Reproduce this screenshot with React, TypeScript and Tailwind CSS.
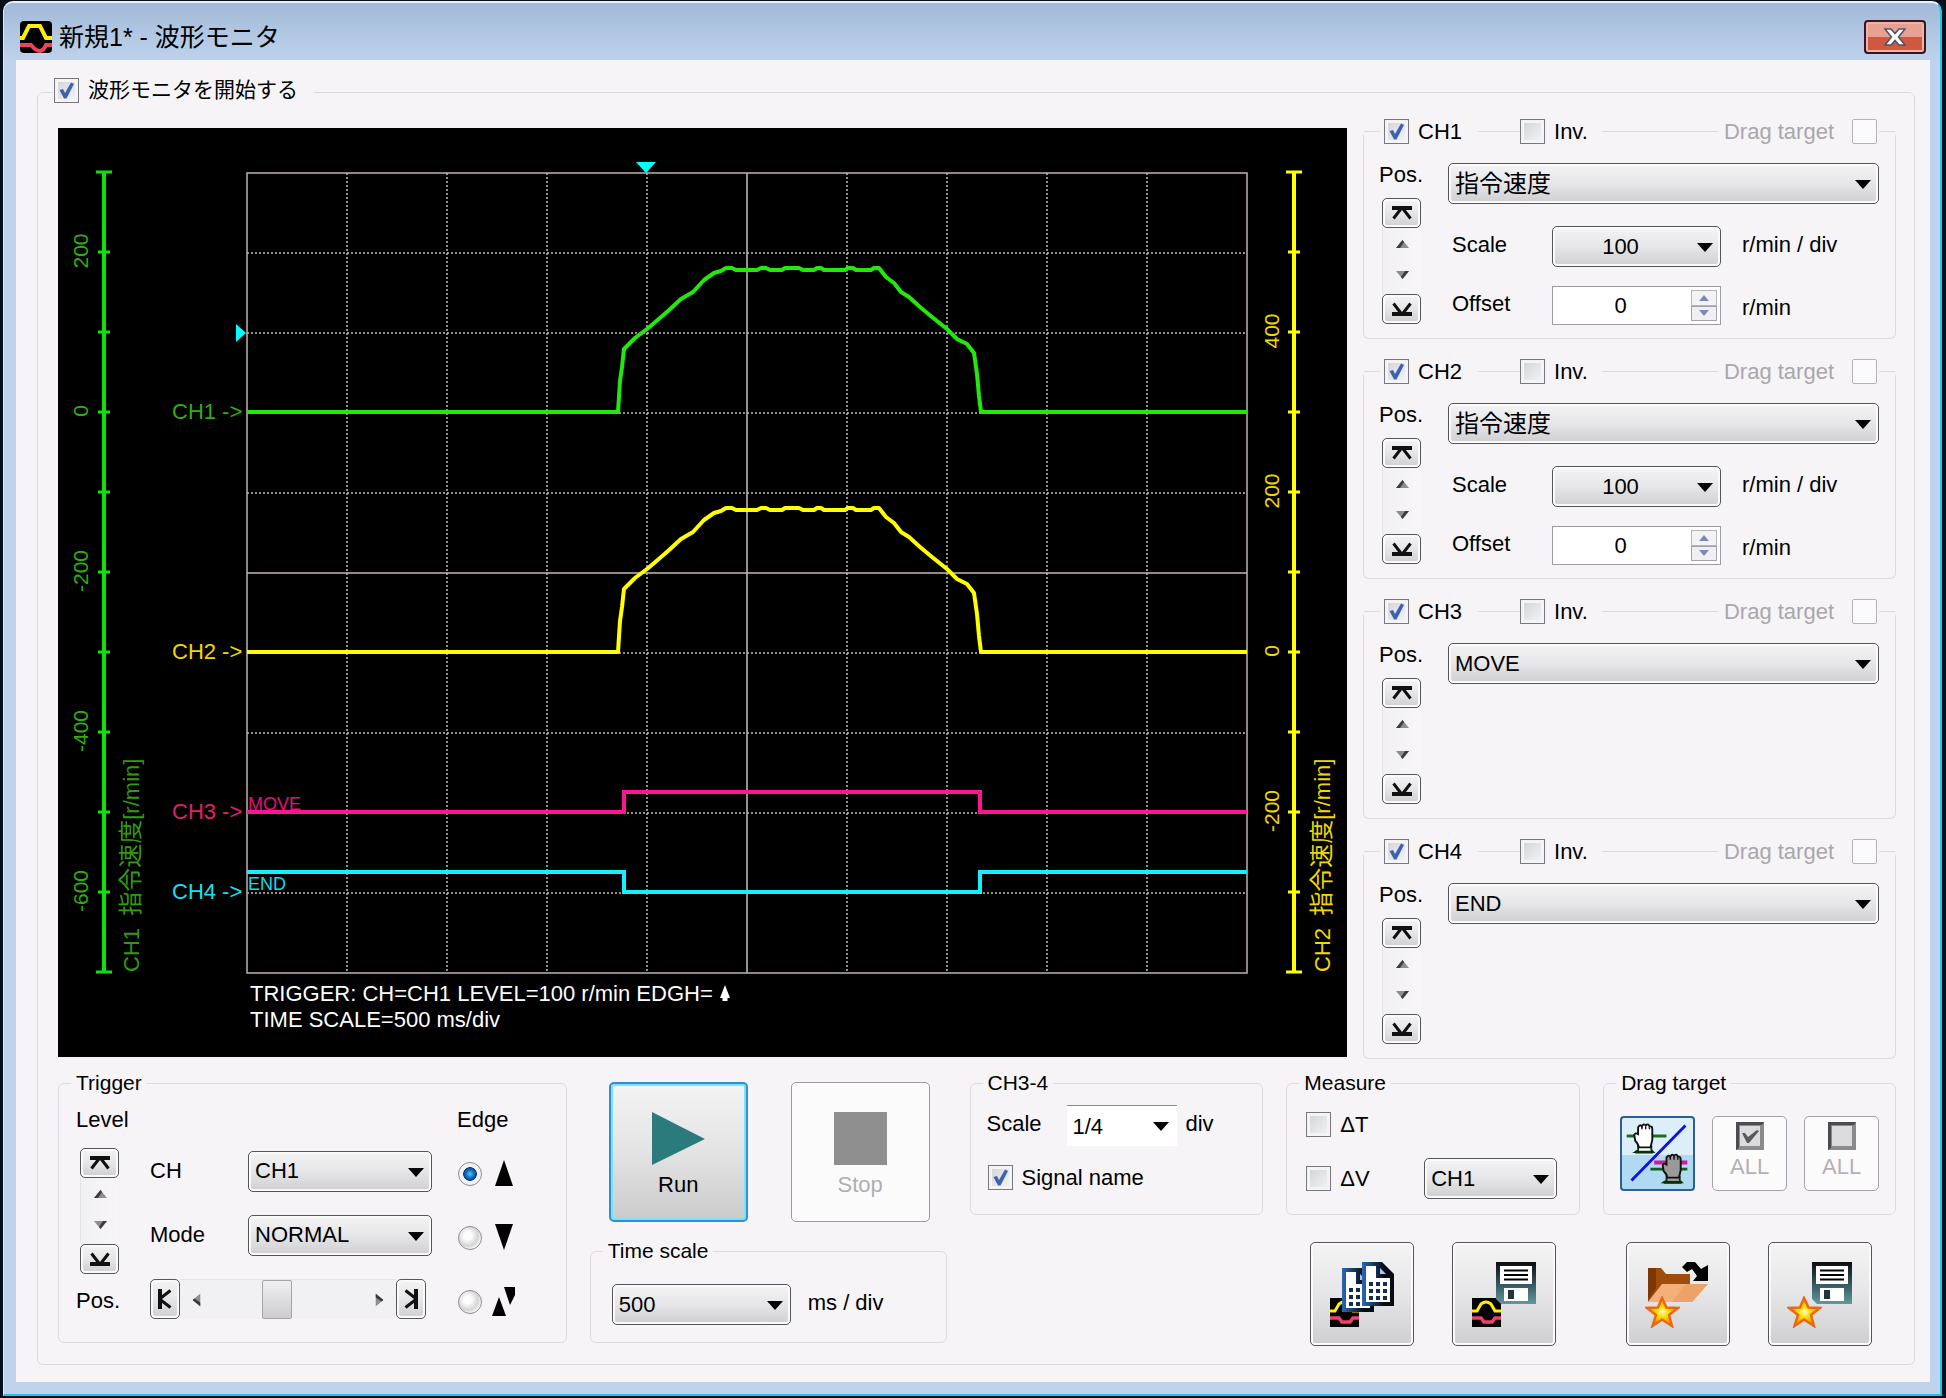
import React, { useState } from 'react';
import clsx from 'clsx';

type Option = string;

interface ChannelConfig {
  id: string;
  signal: string;
  analog: boolean;
}

const channels: ChannelConfig[] = [
  { id: 'CH1', signal: '指令速度', analog: true },
  { id: 'CH2', signal: '指令速度', analog: true },
  { id: 'CH3', signal: 'MOVE', analog: false },
  { id: 'CH4', signal: 'END', analog: false },
];

const signalOptions: Option[] = ['指令速度', 'MOVE', 'END'];

// Speed curve samples in scope units, relative to the channel's zero line
const speedCurve: [number, number][] = [
  [189, 0], [560, 0], [562, 31], [564, 45], [566, 63], [577, 74], [589, 83], [595, 88], [610, 101],
  [623, 113], [635, 120], [646, 132], [656, 139], [663, 141], [668, 144], [674, 144], [678, 142], [699, 142],
  [703, 144], [708, 144], [712, 142], [724, 142], [727, 144], [741, 144], [745, 142], [756, 142], [759, 144],
  [763, 144], [766, 142], [787, 142], [790, 144], [795, 144], [798, 142], [813, 142], [816, 144], [821, 144],
  [828, 135], [836, 129], [843, 120], [851, 115], [862, 105], [874, 95], [889, 83], [899, 73], [909, 68],
  [916, 59], [919, 38], [921, 16], [923, 0], [1189, 0],
];

const curvePoints = (zero: number) => speedCurve.map(([x, y]) => `${x},${zero - y}`).join(' ');

const buttonFace = 'bg-linear-to-b from-[#f4f4f4] via-[#e6e6e8] to-[#cfcfd1] border border-[#55555c] shadow-[inset_0_0_0_2px_#fafafa]';

/* ---------- small controls ---------- */

const CheckBox = ({ label, checked = false, disabled = false, labelFirst = false }: {
  label: string; checked?: boolean; disabled?: boolean; labelFirst?: boolean;
}) => {
  const [on, setOn] = useState(checked);
  return (
    <label className={clsx('flex items-center', labelFirst ? 'flex-row-reverse gap-[18px]' : 'gap-[9px]', disabled && 'text-[#a9a7ab]')}>
      <span className="relative block size-[25px] shrink-0">
        <input
          type="checkbox"
          checked={on}
          disabled={disabled}
          onChange={() => setOn(!on)}
          className={clsx(
            'block size-[25px] appearance-none border',
            disabled
              ? 'rounded-[2px] border-[#b4b2b6] bg-[#fbfafc]'
              : 'border-[#77777d] bg-linear-to-br from-[#cfd2d6] to-[#f6f6f7] shadow-[inset_0_0_0_3px_#f4f4f5]'
          )}
        />
        {on && (
          <svg viewBox="0 0 25 25" className="pointer-events-none absolute inset-0 size-[25px]">
            <path d="M5.500 12 L9 11 L11 15 L17 4.500 L20 6 L12.500 20.500 L10 20.500 Z" fill="#3f62ae" />
          </svg>
        )}
      </span>
      <span className="whitespace-nowrap">{label}</span>
    </label>
  );
};

const Combo = ({ label, value, options, className, center = false, flat = false }: {
  label: string; value: string; options?: Option[]; className?: string; center?: boolean; flat?: boolean;
}) => {
  const [selected, setSelected] = useState(value);
  return (
    <div className={clsx('relative h-[41px]', className)}>
      <select
        aria-label={label}
        value={selected}
        onChange={(e) => setSelected(e.target.value)}
        className={clsx(
          'size-full appearance-none pr-[32px]',
          center ? '[text-align-last:center]' : 'pl-[6px]',
          flat ? 'border-t border-[#8b8b93] bg-white' : 'rounded-[5px]',
          !flat && buttonFace,
          selected === '指令速度' && 'text-[24px]'
        )}
      >
        {(options ?? [value]).map((o) => <option key={o} value={o}>{o}</option>)}
      </select>
      <svg viewBox="0 0 16 9" className="pointer-events-none absolute right-[8px] top-[17px] h-[9px] w-[16px]">
        <path d="M0 0 H16 L8 9 Z" fill="#000" />
      </svg>
    </div>
  );
};

const EndGlyph = ({ turn }: { turn: string }) => (
  <svg viewBox="0 0 22 14" className={clsx('h-[14px] w-[22px]', turn)}>
    <path d="M1 2 H21" stroke="#111" strokeWidth="4" />
    <path d="M11 1.500 L2.500 12.500 M11 1.500 L19.500 12.500" stroke="#111" strokeWidth="3" fill="none" />
  </svg>
);

const StepArrow = ({ turn }: { turn: string }) => (
  <svg viewBox="0 0 13 8" className={clsx('h-[8px] w-[13px]', turn)}>
    <path d="M6.500 0 L13 8 H0 Z" fill="#8d8d92" />
    <path d="M6.500 0 L0 8 H4 L8 2 Z" fill="#3c3c40" />
  </svg>
);

const VerticalStepper = ({ name }: { name: string }) => (
  <div className="flex w-[39px] flex-col">
    <button aria-label={`${name} max`} className={clsx('flex h-[30px] items-center justify-center rounded-[5px]', buttonFace)}>
      <EndGlyph turn="" />
    </button>
    <div className="flex h-[66px] flex-col items-center gap-[17px] border-l border-[#e6e4e8] bg-linear-to-r from-[#f1f0f2] to-[#f8f6f8] pt-[9px]">
      <button aria-label={`${name} up`} className="px-2 py-[3px]"><StepArrow turn="" /></button>
      <button aria-label={`${name} down`} className="px-2 py-[3px]"><StepArrow turn="rotate-180" /></button>
    </div>
    <button aria-label={`${name} min`} className={clsx('flex h-[30px] items-center justify-center rounded-[5px]', buttonFace)}>
      <EndGlyph turn="rotate-180" />
    </button>
  </div>
);

const Spinner = ({ label }: { label: string }) => {
  const [value, setValue] = useState(0);
  return (
    <div className="flex h-[39px] w-[169px] border border-[#9d9ba3] bg-white p-[3px]">
      <input
        type="number"
        aria-label={label}
        value={value}
        onChange={(e) => setValue(Number(e.target.value))}
        className="min-w-0 flex-1 appearance-none bg-transparent pr-[6px] text-center [-moz-appearance:textfield] [&::-webkit-inner-spin-button]:appearance-none"
      />
      <div className="flex w-[26px] flex-col">
        <button aria-label={`${label} up`} onClick={() => setValue(value + 1)} className="flex flex-1 items-center justify-center border border-[#b5b4ba] bg-[#f3f3f5]">
          <svg viewBox="0 0 10 6" className="h-[6px] w-[10px]"><path d="M5 0 L10 6 H0 Z" fill="#7d88b8" /></svg>
        </button>
        <button aria-label={`${label} down`} onClick={() => setValue(value - 1)} className="flex flex-1 items-center justify-center border border-[#a2a1a8] bg-[#f0f0f2]">
          <svg viewBox="0 0 10 6" className="h-[6px] w-[10px]"><path d="M0 0 H10 L5 6 Z" fill="#7d88b8" /></svg>
        </button>
      </div>
    </div>
  );
};

const Group = ({ title, className, children }: { title: string; className?: string; children: React.ReactNode }) => (
  <fieldset className={clsx('rounded-[6px] border border-[#dcdbe0]', className)}>
    <legend className="ml-[12px] h-[28px] px-[5px] text-[21px] leading-[28px]">{title}</legend>
    {children}
  </fieldset>
);

/* ---------- scope ---------- */

const Scope = () => {
  const cols = Array.from({ length: 9 }, (_, i) => i + 1);
  const ticks = Array.from({ length: 11 }, (_, i) => 45 + i * 80);
  const leftScale = [['200', 124], ['0', 284], ['-200', 444], ['-400', 604], ['-600', 764]] as const;
  const rightScale = [['400', 204], ['200', 364], ['0', 524], ['-200', 684]] as const;

  return (
    <svg
      viewBox="0 0 1289 929"
      className="block h-auto w-full bg-black font-['Liberation_Sans','Noto_Sans_CJK_JP',sans-serif]"
      fontSize="22"
    >
      {/* graticule */}
      {cols.map((i) => (
        <React.Fragment key={i}>
          <line x1={189 + i * 100} x2={189 + i * 100} y1="45" y2="845" stroke="#c9bfbf" strokeWidth="1.500" strokeDasharray={i === 5 ? undefined : '2 2'} />
          <line y1={45 + i * 80} y2={45 + i * 80} x1="189" x2="1189" stroke="#c9b9b9" strokeWidth="1.500" strokeDasharray={i === 5 ? undefined : '2 2'} />
        </React.Fragment>
      ))}
      <rect x="189" y="45" width="1000" height="800" fill="none" stroke="#bfb3b3" strokeWidth="1.500" />

      {/* vertical scales */}
      <g stroke="#10e010" strokeWidth="4">
        <line x1="46" x2="46" y1="44" y2="844" />
        {ticks.map((y, i) => {
          const w = i === 0 || i === 10 ? 8 : 6;
          return <line key={y} x1={46 - w} x2={46 + w} y1={y - 1} y2={y - 1} strokeWidth="3" />;
        })}
      </g>
      <g stroke="#ffff00" strokeWidth="4">
        <line x1="1236" x2="1236" y1="44" y2="844" />
        {ticks.map((y, i) => {
          const w = i === 0 || i === 10 ? 8 : 6;
          return <line key={y} x1={1236 - w} x2={1236 + w} y1={y - 1} y2={y - 1} strokeWidth="3" />;
        })}
      </g>
      <g fill="#2fae0e" fontSize="21" textAnchor="middle">
        {leftScale.map(([t, y]) => <text key={t} transform={`translate(30 ${y - 1}) rotate(-90)`}>{t}</text>)}
      </g>
      <g fill="#f0d800" fontSize="21" textAnchor="middle">
        {rightScale.map(([t, y]) => <text key={t} transform={`translate(1221 ${y - 1}) rotate(-90)`}>{t}</text>)}
      </g>
      <text transform="translate(81 844) rotate(-90)" fill="#2f9c0e">
        CH1{'\u00a0\u00a0'}<tspan fontSize="24">指令速度</tspan>[r/min]
      </text>
      <text transform="translate(1272 844) rotate(-90)" fill="#f0d800">
        CH2{'\u00a0\u00a0'}<tspan fontSize="24">指令速度</tspan>[r/min]
      </text>

      {/* trigger markers */}
      <path d="M578 34 H598 L588 45 Z" fill="#00ffff" />
      <path d="M178 196 L188 205 L178 214 Z" fill="#00ffff" />

      {/* channel markers */}
      <text x="114" y="291" fill="#2fae0e">{'CH1 ->'}</text>
      <text x="114" y="531" fill="#f0d800">{'CH2 ->'}</text>
      <text x="114" y="691" fill="#e0206c">{'CH3 ->'}</text>
      <text x="114" y="771" fill="#16e0f0">{'CH4 ->'}</text>
      <text x="190" y="682" fill="#e0107c" fontSize="18">MOVE</text>
      <text x="190" y="762" fill="#16d8e8" fontSize="18">END</text>

      {/* traces */}
      <g fill="none" strokeWidth="4">
        <polyline points={curvePoints(284)} stroke="#22e80c" strokeLinejoin="round" />
        <polyline points={curvePoints(524)} stroke="#ffff00" strokeLinejoin="round" />
        <polyline points="189,684 566,684 566,664 922,664 922,684 1189,684" stroke="#ff1493" />
        <polyline points="189,744 566,744 566,764 922,764 922,744 1189,744" stroke="#14f0ff" />
      </g>

      <text x="192" y="873" fill="#fff">TRIGGER: CH=CH1 LEVEL=100 r/min EDGH=</text>
      <path d="M667 857 L672 870 H669.500 V873 H664.500 V870 H662 Z" fill="#fff" />
      <text x="192" y="899" fill="#fff">TIME SCALE=500 ms/div</text>
    </svg>
  );
};

/* ---------- channel panel ---------- */

const ChannelPanel = ({ channel }: { channel: ChannelConfig }) => (
  <fieldset className="h-[222px] rounded-[6px] border border-t-0 border-[#dcdbe0]">
    <legend className="flex h-[28px] w-full items-center">
      <span className="h-px w-[16px] bg-[#dcdbe0]" />
      <span className="pl-[4px] pr-[16px]"><CheckBox label={channel.id} checked /></span>
      <span className="h-px w-[42px] bg-[#dcdbe0]" />
      <CheckBox label="Inv." />
      <span className="ml-[14px] mr-[6px] h-px flex-1 bg-[#dcdbe0]" />
      <CheckBox label="Drag target" disabled labelFirst />
      <span className="ml-[2px] h-px w-[16px] bg-[#dcdbe0]" />
    </legend>
    <div className="flex pl-[15px] pr-[16px]">
      <div className="w-[69px] pt-[16px]">
        <div className="h-[37px] leading-[28px]">Pos.</div>
        <div className="pl-[3px]"><VerticalStepper name={`${channel.id} position`} /></div>
      </div>
      <div className="flex-1 pt-[18px]">
        <Combo label={`${channel.id} signal`} value={channel.signal} options={signalOptions} />
        {channel.analog && (
          <div className="mt-[22px] grid grid-cols-[104px_169px_1fr] items-center gap-y-[19px] leading-[28px]">
            <span className="pb-[4px] pl-[4px]">Scale</span>
            <Combo label={`${channel.id} scale`} value="100" center />
            <span className="pb-[4px] pl-[21px]">r/min / div</span>
            <span className="pb-[4px] pl-[4px]">Offset</span>
            <Spinner label={`${channel.id} offset`} />
            <span className="pl-[21px] pt-[4px]">r/min</span>
          </div>
        )}
      </div>
    </div>
  </fieldset>
);

/* ---------- icons ---------- */

const WaveTile = ({ x, y, size = 29 }: { x: number; y: number; size?: number }) => (
  <svg x={x} y={y} width={size} height={size} viewBox="0 0 29 29">
    <rect width="29" height="29" fill="#000" />
    <path d="M0 13 H5 L9 6 Q14 2 19 6 L23 13 H29" fill="none" stroke="#ffee00" strokeWidth="3" />
    <path d="M0 20 H9 L12 24 H20 L23 20 H29" fill="none" stroke="#f0406c" strokeWidth="3.500" />
  </svg>
);

const Floppy = () => (
  <svg x="43" y="19" width="40" height="42" viewBox="0 0 40 42">
    <defs>
      <linearGradient id="floppy" x1="0" y1="0" x2="0" y2="1">
        <stop offset="0" stopColor="#0a0c10" />
        <stop offset="0.500" stopColor="#34535c" />
        <stop offset="1" stopColor="#5f9a9c" />
      </linearGradient>
    </defs>
    <path d="M0 0 H40 V42 H5 L0 37 Z" fill="url(#floppy)" />
    <rect x="4" y="4" width="32" height="18" fill="#fff" />
    <path d="M8 8.500 H32 M8 13 H32 M8 17.500 H32" stroke="#000" strokeWidth="2" />
    <rect x="8" y="26" width="24" height="13" fill="#fff" />
    <rect x="12" y="28" width="6" height="9" fill="#22343e" />
  </svg>
);

const SheetPage = ({ x, y }: { x: number; y: number }) => (
  <svg x={x} y={y} width="32" height="44" viewBox="0 0 32 44">
    <defs>
      <linearGradient id="sheet" x1="0" y1="0" x2="1" y2="0">
        <stop offset="0" stopColor="#2c68b4" />
        <stop offset="0.700" stopColor="#060a14" />
      </linearGradient>
    </defs>
    <path d="M0 0 H20 L32 12 V44 H0 Z" fill="url(#sheet)" />
    <path d="M4 4 H14 V16 H28 V40 H4 Z" fill="#fff" />
    <path d="M18 6 L24 12 H18 Z" fill="#a8c8f0" />
    {[20, 27, 34].map((cy) => [7, 14, 21].map((cx) => (
      <rect key={`${cx}-${cy}`} x={cx} y={cy} width="4" height="4" fill="#142c50" />
    )))}
  </svg>
);

const Star = () => (
  <svg x="18" y="53" width="35" height="32" viewBox="0 0 35 32">
    <defs>
      <radialGradient id="star">
        <stop offset="0" stopColor="#fffbd0" />
        <stop offset="0.350" stopColor="#ffe200" />
        <stop offset="1" stopColor="#ff8000" />
      </radialGradient>
    </defs>
    <path d="M17 2 L21.500 11.500 L33 12 L24 19 L27 30 L17 23.500 L7.500 30 L11 19 L2 12 L13 11.500 Z" fill="url(#star)" stroke="#e86a10" strokeWidth="2.500" />
  </svg>
);

const CopyWaveIcon = () => (
  <svg viewBox="0 0 102 102" className="size-full">
    <WaveTile x={19} y={55} />
    <SheetPage x={31} y={25} />
    <SheetPage x={51} y={19} />
  </svg>
);

const SaveWaveIcon = () => (
  <svg viewBox="0 0 102 102" className="size-full">
    <WaveTile x={19} y={55} />
    <Floppy />
  </svg>
);

const OpenFavoriteIcon = () => (
  <svg viewBox="1 1 102 102" className="size-full">
    <path d="M22 26 H35 L40 32 H64 V42 H38 L22 60 Z" fill="#a04c0c" />
    <path d="M22 26 H30 V46 L22 58 Z" fill="#7c3608" />
    <path d="M36 42 H82 L66 60 H22 Z" fill="#f4b078" />
    <path d="M60 42 H82 L66 60 H46 Z" fill="#eca268" />
    <path d="M56 25 L61 20 H69 L75 27 L82 23 V39 H67 L71 34 L66 27 L61 30 Z" fill="#000" />
    <svg x="1" y="1" width="102" height="102"><Star /></svg>
  </svg>
);

const SaveFavoriteIcon = () => (
  <svg viewBox="0 0 102 102" className="size-full">
    <Floppy />
    <Star />
  </svg>
);

const Hand = ({ x, y, fill }: { x: number; y: number; fill: string }) => (
  <svg x={x} y={y} width="30" height="33" viewBox="0 0 30 33">
    <path d="M9 24 V29 L6 31 H25 L23 29 V25 Z" fill={fill} stroke="#0a3a10" strokeWidth="2" />
    <path d="M6 31 H25" stroke="#06300a" strokeWidth="3" />
    <path d="M9 5 Q11 1 13 4 Q15 0 17 3 Q20 0 21 4 Q24 3 24 7 V18 Q23 23 22 26 H10 Q9 22 6 19 L5 13 Q6 10 9 12 Z" fill={fill} stroke="#111" strokeWidth="2" />
    <path d="M13 4 V7 M17 4 V7 M21 5 V7" stroke="#111" strokeWidth="1.500" />
  </svg>
);

const DragModeIcon = () => (
  <svg viewBox="0 0 75 75" className="size-full">
    <path d="M5 19 H47" stroke="#1c6c20" strokeWidth="3" />
    <path d="M34 47 H69" stroke="#d018a0" strokeWidth="4" />
    <path d="M30 54 H69" stroke="#145c18" strokeWidth="3" />
    <Hand x={8} y={5} fill="#fff" />
    <path d="M10 66 L67 8" stroke="#1010e0" strokeWidth="3" />
    <Hand x={38} y={37} fill="#9a9a9a" />
  </svg>
);

const AllIcon = ({ checked }: { checked: boolean }) => (
  <svg viewBox="0 0 28 28" className="size-[28px]">
    <rect width="28" height="28" fill="#8a8a8c" />
    <path d="M0 0 H28 L26 3 H3 V26 L0 28 Z" fill="#4c4c50" />
    <rect x="4" y="4" width="20" height="20" fill="#dcdcde" />
    {checked && <path d="M6 11 L9 11 L12 15 L21 8 L23 9 L13 21 H11 Z" fill="#5a5a5c" />}
  </svg>
);

/* ---------- bottom panels ---------- */

const edges = [
  { name: 'rising', path: 'M12 0 L21 26 H3 Z' },
  { name: 'falling', path: 'M3 0 H21 L12 26 Z' },
  { name: 'both', path: 'M7 9 L14 28 H0 Z M12 -1 H23 V7 L18 17 Z' },
];

const TriggerPanel = () => {
  const [edge, setEdge] = useState('rising');
  return (
    <Group title="Trigger" className="mb-[3px]">
      <div className="grid grid-cols-[74px_98px_209px_1fr] grid-rows-[33px_64px_64px_64px] pl-[17px] pt-[9px] leading-[28px]">
        <span className="col-span-3">Level</span>
        <span>Edge</span>

        <div className="row-span-2 pl-[4px] pt-[9px]"><VerticalStepper name="Trigger level" /></div>
        <span className="self-center">CH</span>
        <Combo label="Trigger channel" value="CH1" className="w-[184px] self-center" />
        <div className="row-span-3 grid grid-rows-[64px_64px_64px]">
          {edges.map((e) => (
            <label key={e.name} className="flex items-center gap-[10px] pl-px pt-[5px]">
              <input
                type="radio"
                name="edge"
                aria-label={e.name}
                checked={edge === e.name}
                onChange={() => setEdge(e.name)}
                className="size-[24px] appearance-none rounded-full border border-[#8d8d92] bg-[radial-gradient(circle_at_40%_40%,#fdfdfd_20%,#d4d4d6_55%,#f2f2f3_70%)] checked:bg-[radial-gradient(circle_at_50%_50%,#58c4f4_0%,#1272c4_25%,#0c3f7c_42%,#f2f2f3_46%)]"
              />
              <svg viewBox="0 0 24 28" className="h-[28px] w-[24px] overflow-visible"><path d={e.path} fill="#000" /></svg>
            </label>
          ))}
        </div>

        <span className="self-center">Mode</span>
        <Combo label="Trigger mode" value="NORMAL" className="w-[184px] self-center" />

        <span className="self-center pt-[4px]">Pos.</span>
        <div className="col-span-2 flex h-[40px] w-[276px] items-center self-center">
          <button aria-label="Position start" className={clsx('flex h-full w-[30px] items-center justify-center rounded-[5px]', buttonFace)}>
            <EndGlyph turn="-rotate-90 shrink-0" />
          </button>
          <div className="flex h-full flex-1 items-center justify-between border-t border-[#e2e1e4] bg-[#f1f0f2] px-[10px]">
            <button aria-label="Position left"><StepArrow turn="-rotate-90" /></button>
            <input
              type="range"
              aria-label="Trigger position"
              defaultValue={41}
              className="h-full w-[156px] appearance-none bg-transparent [&::-webkit-slider-thumb]:h-[39px] [&::-webkit-slider-thumb]:w-[30px] [&::-webkit-slider-thumb]:appearance-none [&::-webkit-slider-thumb]:rounded-[2px] [&::-webkit-slider-thumb]:border [&::-webkit-slider-thumb]:border-[#a3a3a8] [&::-webkit-slider-thumb]:bg-linear-to-b [&::-webkit-slider-thumb]:from-[#f0f0f1] [&::-webkit-slider-thumb]:to-[#cdcdd0]"
            />
            <button aria-label="Position right"><StepArrow turn="rotate-90" /></button>
          </div>
          <button aria-label="Position end" className={clsx('flex h-full w-[30px] items-center justify-center rounded-[5px]', buttonFace)}>
            <EndGlyph turn="rotate-90 shrink-0" />
          </button>
        </div>
      </div>
    </Group>
  );
};

const RunPanel = () => (
  <div className="mb-[3px] flex flex-col justify-between">
    <div className="flex gap-[43px] pl-[19px] pt-[13px]">
      <button className="flex h-[140px] w-[139px] flex-col items-center rounded-[5px] border-2 border-[#2f8fd0] bg-linear-to-b from-[#f4f4f4] from-0% via-[#e4e4e5] via-48% to-[#cbcbcc] pt-[28px] shadow-[inset_0_0_0_2px_#7fe0fb]">
        <svg viewBox="0 0 53 53" className="size-[53px]"><path d="M0 0 L53 27 L0 53 Z" fill="#2b7a7c" /></svg>
        <span className="pt-[6px] leading-[28px]">Run</span>
      </button>
      <button disabled className="flex h-[140px] w-[139px] flex-col items-center rounded-[5px] border border-[#9a99a4] bg-[#fbfbfc] pt-[29px] text-[#b0aeb2]">
        <span className="size-[53px] bg-[#8f8f90]" />
        <span className="pt-[6px] leading-[28px]">Stop</span>
      </button>
    </div>
    <Group title="Time scale" className="h-[106px]">
      <div className="flex items-center gap-[17px] pl-[21px] pt-[19px]">
        <Combo label="Time scale" value="500" className="w-[179px]" />
        <span className="pb-[4px]">ms / div</span>
      </div>
    </Group>
  </div>
);

const App = () => (
  <div className="flex min-h-screen bg-[#04101c] pb-[2px] pl-[3px] pr-[4px] pt-px font-['Liberation_Sans','Noto_Sans_CJK_JP',sans-serif] text-[22px] text-black">
    <div className="flex flex-1 flex-col rounded-t-[10px] border-b-2 border-l border-r-2 border-t-2 border-b-[#1fc4ec] border-l-[#dfeaf6] border-r-[#1fc4ec] border-t-[#e8f1fa] bg-[#bfd3ec] bg-linear-to-b from-[#a2bad8] to-[#bfd3ec] to-[60px] pb-[12px] pl-[12px] pr-[10px]">
      <header className="flex h-[57px] items-center justify-between pl-[4px] pr-[4px] pt-[10px]">
        <div className="flex items-center gap-[7px]">
          <svg viewBox="0 0 32 32" className="size-[32px]">
            <rect width="32" height="32" rx="4" fill="#000" />
            <path d="M0 17 H3 L9 5 H20 L26 17 H32" fill="none" stroke="#ffee00" strokeWidth="4" />
            <path d="M0 24 H11 Q16 30 20 30 Q24 29 26 24 H32" fill="none" stroke="#f0405c" strokeWidth="4" />
          </svg>
          <h1 className="text-[25px] leading-[32px]">新規1* - 波形モニタ</h1>
        </div>
        <button aria-label="Close" className="flex h-[34px] w-[62px] items-center justify-center rounded-[4px] border-2 border-[#3a1424] bg-linear-to-b from-[#e8a090] from-50% to-[#d0583e] to-50% shadow-[inset_0_0_0_2px_#f0b4a4]">
          <svg viewBox="0 0 22 18" className="h-[18px] w-[22px]">
            <path d="M1 1 H7 L11 5.500 L15 1 H21 L14.500 9 L21 17 H15 L11 12.500 L7 17 H1 L7.500 9 Z" fill="#fff" stroke="#4a5468" strokeWidth="1.500" />
          </svg>
        </button>
      </header>

      <main className="flex-1 bg-[#f6f4f7] pb-[16px] pl-[21px] pr-[15px] pt-[16px]">
        <fieldset className="rounded-[6px] border border-[#d9d8de] pb-[18px] pl-[20px] pr-[18px]">
          <legend className="-ml-[6px] h-[32px] pl-[2px] pr-[16px] text-[21px] leading-[28px]">
            <CheckBox label="波形モニタを開始する" checked />
          </legend>

          <div className="flex gap-[16px]">
            <div className="min-w-0 flex-1 pt-[20px]"><Scope /></div>
            <div className="flex w-[533px] flex-col gap-[18px] pt-[9px]">
              {channels.map((c) => <ChannelPanel key={c.id} channel={c} />)}
            </div>
          </div>

          <div className="mt-[10px] grid grid-cols-[509fr_357fr_294fr_294fr_293fr] gap-x-[23px]">
            <TriggerPanel />
            <RunPanel />

            <Group title="CH3-4" className="h-[146px]">
              <div className="flex items-center pl-[16px] pt-[8px]">
                <span className="w-[80px] pb-[4px]">Scale</span>
                <Combo label="CH3-4 scale" value="1/4" flat className="w-[110px]" />
                <span className="pb-[4px] pl-[9px]">div</span>
              </div>
              <div className="pl-[17px] pt-[15px]"><CheckBox label="Signal name" checked /></div>
            </Group>

            <div>
              <Group title="Measure" className="h-[146px]">
                <div className="flex justify-between pl-[19px] pr-[22px]">
                  <div className="flex flex-col gap-[21px] pt-[11px]">
                    <CheckBox label="ΔT" />
                    <CheckBox label="ΔV" />
                  </div>
                  <Combo label="Measure channel" value="CH1" className="mt-[61px] w-[133px]" />
                </div>
              </Group>
              <div className="flex gap-[38px] pl-[24px] pt-[27px]">
                <button aria-label="Copy waveform" className={clsx('size-[104px] rounded-[5px]', buttonFace)}><CopyWaveIcon /></button>
                <button aria-label="Save waveform" className={clsx('size-[104px] rounded-[5px]', buttonFace)}><SaveWaveIcon /></button>
              </div>
            </div>

            <div>
              <Group title="Drag target" className="h-[146px]">
                <div className="flex gap-[17px] pl-[16px] pt-[19px] leading-[28px]">
                  <button aria-label="Toggle drag mode" className="size-[75px] rounded-[4px] border-2 border-[#2c5f94] bg-linear-to-b from-[#dceefa] from-52% to-[#b0daf2] to-52%"><DragModeIcon /></button>
                  <button disabled className="flex size-[75px] flex-col items-center gap-[3px] rounded-[5px] border border-[#a3a2a8] bg-[#fbfbfc] pt-[5px] text-[#b4b0b6]"><AllIcon checked />ALL</button>
                  <button disabled className="flex size-[75px] flex-col items-center gap-[3px] rounded-[5px] border border-[#a3a2a8] bg-[#fbfbfc] pt-[5px] text-[#b4b0b6]"><AllIcon checked={false} />ALL</button>
                </div>
              </Group>
              <div className="flex gap-[38px] pl-[23px] pt-[27px]">
                <button aria-label="Open favorite" className={clsx('size-[104px] rounded-[5px]', buttonFace)}><OpenFavoriteIcon /></button>
                <button aria-label="Save favorite" className={clsx('size-[104px] rounded-[5px]', buttonFace)}><SaveFavoriteIcon /></button>
              </div>
            </div>
          </div>
        </fieldset>
      </main>
    </div>
  </div>
);

export default App;
